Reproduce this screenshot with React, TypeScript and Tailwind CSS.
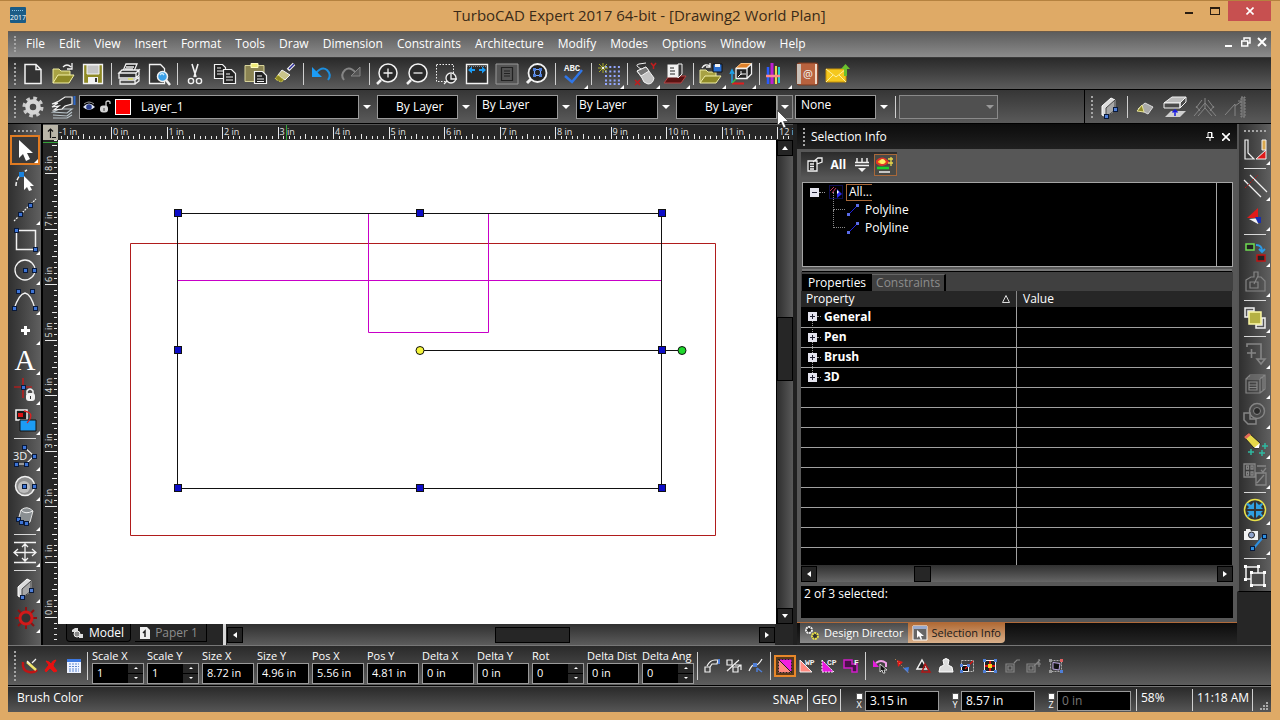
import React, { useState } from "react";
import clsx from "clsx";

const W = "#f2f2f2";
const B = "#4f7fd8";
const G = "#858585";

const node = (x: number, y: number, c = "#3d74d6") => (
  <rect x={x - 1.5} y={y - 1.5} width="4" height="4" fill={c} stroke="#0a1a3a" strokeWidth="1" />
);

// every drawing sits in a 24 x 24 box
const icons: Record<string, React.ReactNode> = {
  new: <path d="M4 2.5h11l5 5v14H4zM15 2.5v5h5" fill="#333" stroke={W} strokeWidth="1.5" />,
  open: (
    <>
      <path d="M2 21V7h6l2 2h9v4" fill="#a8a244" stroke="#eceaa0" />
      <path d="M2 21l5-8h16l-5 8z" fill="#8f8a26" stroke="#f3f0a8" />
      <path d="M12 5q4-4 8 0M21 1v6h-5" fill="none" stroke={W} strokeWidth="1.3" />
    </>
  ),
  save: (
    <>
      <path d="M2.5 2.5h19v19h-19z" fill="#8f8a26" stroke={W} strokeWidth="1.3" />
      <path d="M6 3h12v9H6z" fill="#c4c4c4" stroke={W} />
      <path d="M7 15h10v6H7z" fill={W} />
      <path d="M14 16h2v4h-2z" fill="#333" />
    </>
  ),
  print: (
    <>
      <path d="M6 9l3-7h11l-3 7zM9 5h8M8 7h8" fill="#222" stroke={W} strokeWidth="1.3" />
      <path d="M2 11l3-3h17l-3 3zM2 11h17v5H2zM19 11l3-3v5l-3 3" fill="#333" stroke={W} strokeWidth="1.3" />
      <path d="M3 18h15v4H3zM18 18l4-3v4l-4 3" fill="#555" stroke={W} strokeWidth="1.3" />
      <path d="M11 17h5" stroke="#dfe25a" strokeWidth="1.5" />
    </>
  ),
  preview: (
    <>
      <path d="M2.5 2.5h11l4 4v15h-15z" fill="#333" stroke={W} strokeWidth="1.3" />
      <path d="M19 18l4 5" stroke={W} strokeWidth="2.5" />
      <circle cx="15.5" cy="14.5" r="5" fill="#3aa0e8" stroke={W} strokeWidth="1.5" />
      <path d="M13 13q2-3 4 0" stroke="#c8ebff" fill="none" strokeWidth="1.5" />
    </>
  ),
  cut: (
    <>
      <path d="M9 2l4 13M15 2l-4 13" stroke={W} strokeWidth="1.6" />
      <circle cx="8" cy="19" r="2.6" fill="none" stroke={W} strokeWidth="1.4" />
      <circle cx="16" cy="19" r="2.6" fill="none" stroke={W} strokeWidth="1.4" />
    </>
  ),
  copy: (
    <>
      <path d="M1.5 2.5h8l3 3v11h-11zM4 6h4M4 9h6M4 12h6" fill="#222" stroke={W} strokeWidth="1.2" />
      <path d="M10.5 7.5h8l4 4v10h-12zM13 12h4M13 15h7M13 18h7" fill="#222" stroke={W} strokeWidth="1.2" />
    </>
  ),
  paste: (
    <>
      <path d="M2 3.5h19v16H2z" fill="#8a8352" stroke="#d8d49a" />
      <path d="M8 1.5h7v4H8z" fill="#efeb7a" stroke="#fffcc0" />
      <path d="M11.5 9.5h8l4 4v8h-12zM14 14h5M14 17h7M14 19.5h7" fill="#222" stroke={W} strokeWidth="1.2" />
    </>
  ),
  brush: (
    <>
      <path d="M21 2l-6 6" stroke={W} strokeWidth="3.5" />
      <path d="M21 2l-5 5" stroke="#2c2c9c" strokeWidth="1.5" />
      <path d="M9 8l8 5-5 5-7-5z" fill="#c9c48a" stroke={W} />
      <path d="M5 13l6 5-3 2-6-3z" fill="#908a20" stroke="#d9d35a" strokeDasharray="2 1" />
    </>
  ),
  undo: (
    <>
      <path d="M7 11q6-7 11-3 5 5 1 10" fill="none" stroke="#1c8fe0" strokeWidth="2" />
      <path d="M3 5v10h10z" fill="#1c9cf5" />
    </>
  ),
  redo: (
    <>
      <path d="M17 11q-6-7-11-3-5 5-1 10" fill="none" stroke={G} strokeWidth="2" />
      <path d="M21 5v9h-9z" fill="#555" stroke={G} />
    </>
  ),
  zoomIn: (
    <>
      <circle cx="13" cy="11" r="9" fill="#2a2a2a" stroke={W} strokeWidth="1.5" />
      <path d="M13 6.5v9M8.5 11h9" stroke={W} strokeWidth="1.3" />
      <path d="M6 18l-4 4" stroke={W} strokeWidth="2.5" />
    </>
  ),
  zoomOut: (
    <>
      <circle cx="13" cy="11" r="9" fill="#2a2a2a" stroke={W} strokeWidth="1.5" />
      <path d="M8.5 11h9" stroke={W} strokeWidth="1.3" />
      <path d="M6 18l-4 4" stroke={W} strokeWidth="2.5" />
    </>
  ),
  zoomWindow: (
    <>
      <path d="M1.500 2.500h17v17h-17z" fill="none" stroke={W} strokeDasharray="1.5 1.5" />
      <circle cx="16" cy="16" r="5" fill="#2e2e2e" stroke={W} strokeWidth="1.3" />
      <path d="M12 19l-3 3M16 12v5h6" stroke={W} strokeWidth="1.3" fill="none" />
    </>
  ),
  fit: (
    <>
      <path d="M1.5 2.5h21v19h-21z" fill="#2a2a2a" stroke={W} strokeWidth="1.4" />
      <path d="M3 8l4-3.5V7h3v2H7v2.500zM21 8l-4-3.500V7h-3v2h3v2.500z" fill="#1c9cf5" />
      <path d="M2 4.5h20" stroke={G} strokeDasharray="1 1" />
    </>
  ),
  page: (
    <>
      <path d="M1 2h22v20H1z" fill="#555" stroke="#9a9a9a" />
      <path d="M6.5 5.5h11v13h-11zM9 9h6M9 11.5h6M9 14h6" fill="none" stroke="#222" strokeWidth="1.2" />
    </>
  ),
  zoomView: (
    <>
      <circle cx="12.5" cy="11" r="9" fill="#222" stroke={W} strokeWidth="1.8" />
      <path d="M9.500 7.500h6v6h-6z" fill="none" stroke="#7aa6ff" strokeWidth="1.2" />
      <path d="M8 6h3v3H8zM14 6h3v3h-3zM8 12h3v3H8zM14 12h3v3h-3z" fill={B} />
      <path d="M6 17l-4 4" stroke={W} strokeWidth="3" />
    </>
  ),
  spell: (
    <>
      <text x="3" y="9" fontSize="9" fontWeight="700" fill={W} fontFamily="Liberation Mono, monospace">ABC</text>
      <path d="M4 14l7 6L21 8" fill="none" stroke="#2f76e8" strokeWidth="2.5" />
    </>
  ),
  grid: (
    <>
      <path d="M8 5h15M8 9.5h15M8 14h15M8 18.500h15M8 22h15" stroke="#93a7ff" strokeWidth="2" strokeDasharray="2 2.300" />
      <path d="M2 2l8 8M10 2l-8 8M6 1v10M1 6h10" stroke="#a9ac2a" strokeWidth="1" />
      <path d="M5 5h2v2H5z" fill={W} />
    </>
  ),
  mouse: (
    <>
      <path d="M4 9l9-4 8 11q-1 6-6 6-5-1-6-6z" fill="#c4c4c4" stroke={W} />
      <path d="M4 9l9-4 3 4-8 5z" fill="#777" stroke={W} />
      <path d="M8 7Q1 3 6 2l7-1" fill="none" stroke={W} />
      <path d="M2 18l5 5M7 18l-5 5M18 1l2.500 3L23 1M20.500 4v3" stroke="#c21d1d" strokeWidth="1.5" fill="none" />
    </>
  ),
  plane: (
    <>
      <path d="M1 21l5-7h17l-5 7z" fill="#5a1212" stroke="#b54545" />
      <path d="M4.5 2.5h11v13h-11z" fill={W} />
      <path d="M7 6h4M7 9h5M7 12h5" stroke="#222" />
      <path d="M15 2h4v10l-4 4z" fill="#3a3a3a" stroke={W} />
    </>
  ),
  folderView: (
    <>
      <path d="M1 21V8h6l2 2h8v4" fill="#a8a244" stroke="#eceaa0" />
      <path d="M1 21l5-7h16l-5 7z" fill="#8f8a26" stroke="#f3f0a8" />
      <path d="M14 2h9v8h-9z" fill="#2b6fd0" stroke="#111" />
      <path d="M16 2h5v3h-5z" fill={W} />
      <path d="M3 6q3-5 8-2M11 1v4H7" fill="none" stroke={W} strokeWidth="1.3" />
    </>
  ),
  box3d: (
    <>
      <path d="M7 6l5-4.500h10L18 6z" fill="#e0812a" stroke="#f9c080" />
      <path d="M7 6.500h11v10H7zM18 6l4.500-4V12L18 16.500" fill="#222" stroke={W} strokeWidth="1.3" />
      <path d="M12 9v4M12 12l-3 3M12 12h5" stroke={W} />
      <path d="M3 21V9M1 12l2-4 2 4" stroke="#1ca0e8" strokeWidth="1.5" fill="none" />
      <path d="M3 21.500h12" stroke="#e01e1e" strokeWidth="2" />
      <path d="M3 21l4-4" stroke="#32c24a" strokeWidth="1.5" />
    </>
  ),
  pens: (
    <>
      <path d="M3 5v17" stroke="#2a5bff" strokeWidth="2.5" />
      <path d="M7 1v21" stroke="#c01fd0" strokeWidth="3" />
      <path d="M11 4v18" stroke="#e8e045" strokeWidth="2" />
      <path d="M14 5v16" stroke="#24c9d8" strokeWidth="2" />
      <path d="M1 14h14" stroke="#ff8c8c" strokeWidth="2.5" />
    </>
  ),
  address: (
    <>
      <rect x="2" y="1" width="21" height="22" rx="2" fill="#b8623e" stroke="#7d3c22" />
      <path d="M2 2h4v20H2z" fill="#c9c0b8" />
      <path d="M20 2h2v20h-2z" fill="#f0d9c8" />
      <text x="8" y="16" fontSize="11" fill={W} fontFamily="Open Sans, sans-serif">@</text>
    </>
  ),
  mail: (
    <>
      <path d="M1 7h20v13H1z" fill="#f5c81e" stroke="#c79208" />
      <path d="M1 7l10 8L21 7M1 20l7-7M21 20l-7-7" fill="none" stroke="#fff2a0" />
      <path d="M19 14V7h-3l4.500-5L25 7h-3v7z" fill="#6bc02e" />
    </>
  ),
  gear: (
    <>
      <circle cx="12" cy="12" r="8.5" fill="none" stroke="#c9c9c9" strokeWidth="4" strokeDasharray="3.5 3.17" />
      <circle cx="12" cy="12" r="5.5" fill="none" stroke="#d6d6d6" strokeWidth="4.5" />
    </>
  ),
  layersHand: (
    <>
      <path d="M2 17l6-3h13l-5 4zM2 20l14 1 5-4M2 23h14l5-3" fill="#444" stroke="#b9c4c9" strokeWidth="1.2" />
      <path d="M1 9l7-3 6-4h7v7l-7 2-3 3-8 1 5-4-7 1 6-4z" fill="#2c2c2c" stroke={W} strokeWidth="1.2" />
      <path d="M23.5 1v9" stroke="#2b66c9" strokeWidth="2" />
    </>
  ),
  slab: (
    <>
      <path d="M5 11l9-8 4 2v10l-9 7-4-2z" fill="#dcdcdc" stroke="#fff" />
      <path d="M9 13l9-8v10l-9 7z" fill="#a6a6a6" stroke="#444" />
      {node(18, 14, B)}{node(9, 21, B)}
    </>
  ),
  prism: (
    <>
      <path d="M5 14l7-6 8 4-5 7z" fill="#a9a9a9" stroke="#ddd" />
      <path d="M4 16l5-6 2 7z" fill="#8f8a26" stroke="#e6e29a" />
    </>
  ),
  slabUp: (
    <>
      <path d="M1 8l8-6h14l-6 6z" fill="#bbb" stroke={W} />
      <path d="M1 8h16v5H1zM17 8l6-6v5l-6 6z" fill="#4a4a4a" stroke={W} />
      <path d="M2 22l6-6h15l-6 6z" fill="#cfcfcf" />
      <path d="M12 21v-6M9.500 17.500L12 15l2.500 2.500" stroke="#1a1ae0" strokeWidth="1.5" fill="none" />
    </>
  ),
  roof: <path d="M1 21L12 8l11 13M5 21l7-8 7 8M12 3v10M7 16l-4-5M17 16l4-5M9 5l-6 8M15 5l6 8" fill="none" stroke={G} />,
  wallUp: (
    <>
      <path d="M2 20L12 9v12M12 11l7-5M19 6l-1 4M19 6h-4" fill="none" stroke={G} />
      <path d="M18 2h4v20h-4z" fill="#6a6a6a" stroke={G} strokeDasharray="2 1" />
    </>
  ),
  arrow: <path d="M6 2v18l4-4 3 7 4-2-3-6h6z" fill="#fff" />,
  editNode: (
    <>
      <path d="M3 18q0-10 11-16" stroke={W} fill="none" strokeDasharray="4 2" strokeWidth="1.5" />
      <path d="M6 4h5v5H6z" fill="#1a84e0" />
      <path d="M11 8v14l3-3 2 4 3-1-2-4h4z" fill="#fff" />
    </>
  ),
  line: (
    <>
      <path d="M1 23L23 1" stroke={W} strokeWidth="1.2" strokeDasharray="2 1" />
      {node(7, 16)}{node(17, 7)}
    </>
  ),
  rect: (
    <>
      <path d="M3.5 2.5h19v19h-19z" fill="none" stroke={W} strokeWidth="1.5" />
      {node(3, 2)}{node(22, 21)}
    </>
  ),
  circle: (
    <>
      <circle cx="12" cy="12" r="10" fill="none" stroke={W} strokeWidth="1.3" />
      {node(12, 12)}{node(21, 12)}
    </>
  ),
  curve: (
    <>
      <path d="M1 21Q6 6 12 5q6 1 10 16" fill="none" stroke={W} strokeWidth="1.3" />
      {node(1, 20)}{node(22, 20)}{node(5, 3)}{node(19, 3)}
    </>
  ),
  point: <path d="M11 8h3v3h3v3h-3v3h-3v-3H8v-3h3z" fill="#fff" />,
  text: (
    <text x="12" y="22" fontSize="29" textAnchor="middle" fill="#fff" fontFamily="Liberation Serif, serif">A</text>
  ),
  lockPoint: (
    <>
      <path d="M10 0v20M1 9h18" stroke="#d11" strokeWidth="1.2" />
      {node(10, 9)}
      <path d="M14 16v-3q3-4 6 0v3" fill="none" stroke={W} strokeWidth="1.5" />
      <rect x="13" y="15" width="9" height="8" rx="3" fill={W} />
      <path d="M17 18h1v3h-1z" fill="#333" />
    </>
  ),
  moveCopy: (
    <>
      <path d="M3 2h11v10H3z" fill="#1a1a1a" stroke={W} strokeWidth="1.5" />
      <path d="M5 5h5v4H5z" fill="#d11" />
      <path d="M7 12h16v11H7z" fill="#1c9cf5" stroke="#111" />
      <path d="M11 3q12 2 3 12" fill="none" stroke="#e02020" strokeWidth="1.3" />
    </>
  ),
  poly3d: (
    <>
      <text x="0" y="16" fontSize="11" fill={W} fontFamily="Open Sans, sans-serif">3D</text>
      <path d="M11 3l10 9-8 8H2" fill="none" stroke={W} strokeWidth="1.2" />
      {node(11, 3)}{node(21, 12)}{node(13, 20)}{node(3, 20)}
    </>
  ),
  sphere: (
    <>
      <circle cx="12" cy="12" r="9.5" fill="#8d8d8d" stroke={W} strokeWidth="1.5" />
      <circle cx="11" cy="13" r="6" fill="#bdbdbd" />
      {node(11, 12)}{node(21, 12)}
    </>
  ),
  cylinder: (
    <>
      <path d="M8 6q6-5 12 1l-3 11q-4 3-9 0L6 13z" fill="#8a8f92" stroke="#e3e3e3" />
      <path d="M8 6q4 5 12 1" fill="none" stroke={W} />
      {node(5, 15)}{node(13, 19)}{node(8, 18)}
    </>
  ),
  dimension: (
    <path d="M1 2.5h22M1 22.5h22M12 4v17M1 12.5h22M9 7l3-3 3 3M9 18l3 3 3-3M5 9l-4 3.500 4 3.500M19 9l4 3.500-4 3.500" fill="none" stroke={W} strokeWidth="1.3" />
  ),
  redGear: (
    <>
      <path d="M13 1v22M2 12h22M5 4l16 16M21 4L5 20" stroke="#8d1111" strokeWidth="2" />
      <circle cx="13" cy="12" r="6" fill="#333" stroke="#d01a1a" strokeWidth="3" />
    </>
  ),
  uShape: (
    <>
      <path d="M2 2h3v13l6 6H2zM2 2v19" fill="none" stroke={W} strokeWidth="1.2" />
      <path d="M19 2h4v10h-4z" fill="#d9a84e" stroke={W} />
      <path d="M23 12v9H13z" fill="#e01a1a" stroke={W} />
    </>
  ),
  trim: (
    <>
      <path d="M1 6l17 17M7 1l17 17" stroke={W} strokeWidth="1.2" />
      <path d="M2 14L15 1" stroke="#c01414" strokeDasharray="2 1.5" />
    </>
  ),
  wedge: (
    <>
      <path d="M15 4v10H4z" fill="#e01a1a" />
      <path d="M6 15l9 5 2-6z" fill={W} />
      <path d="M12 13h6v6h-3z" fill="#1a2fae" />
    </>
  ),
  replace: (
    <>
      <path d="M3 4h8v6H3z" fill="#222" stroke="#6fdc52" strokeWidth="1.5" />
      <path d="M14 15h8v6h-8z" fill="#222" stroke="#c01414" strokeWidth="1.5" />
      <path d="M13 5q6 0 6 6M16 9l3 3 3-3" fill="none" stroke="#2c9be8" strokeWidth="1.8" />
    </>
  ),
  house: <path d="M3 10l5-3h3V2h4v5h3l4 4v10H3zM7 12h8v6H7zM11 14l4-8" fill="none" stroke={G} strokeWidth="1.2" />,
  overlap: (
    <>
      <path d="M2 2h9v3H5v6H2zM22 22h-9v-3h6v-7h3z" fill="#555" stroke={W} strokeWidth="1.5" />
      <path d="M6 6h12v12H6z" fill="#b5b144" stroke="#fbf8a5" strokeWidth="1.5" />
    </>
  ),
  addDown: <path d="M4 5V2h14v15M4 11h9M8.5 7v9M14 17l4 5 4-5z" fill="none" stroke={G} strokeWidth="1.6" />,
  boxes: <path d="M3 7h14v14H3zM3 7l4-4h15v14l-5 4M17 7l5-4M6 10h8v8H6zM6 13h8M6 15.500h8M5 5h15v14" fill="none" stroke={G} strokeWidth="1.2" />,
  union: (
    <>
      <circle cx="14" cy="9" r="7.5" fill="#4a4a4a" stroke={G} strokeWidth="1.5" />
      <circle cx="14" cy="9" r="3.5" fill="#2a2a2a" stroke={G} />
      <path d="M1 11h6v6h6v5H5l-4-4z" fill="#3a3a3a" stroke={G} strokeWidth="1.5" />
    </>
  ),
  pencil: (
    <>
      <path d="M1 5l5-4 11 10-1 5h-5z" fill="#e6d94a" stroke="#222" />
      <path d="M1 5l5-4 2 2-5 4z" fill="#e06a5a" />
      <path d="M16 16l1-5-6 5z" fill="#fff" />
      <path d="M8 17v6M5 20h6M19 18v6M16 21h6M22 11v6M19 14h6" stroke="#2fb8a0" strokeWidth="1.5" />
    </>
  ),
  blocks: (
    <path d="M1 2h11v13H1zM3.5 4h2v3h-2zM8 4h2v3H8zM3.5 10h2v3h-2zM8 10h2v3H8zM13 11h10v12H13zM14 21l7-8M14 4h9M18 8l2 2 3-4" fill="none" stroke={G} strokeWidth="1.3" />
  ),
  compress: (
    <>
      <circle cx="12" cy="12" r="10.5" fill="#333" stroke="#e8e04a" strokeWidth="1.5" />
      <path d="M11 4v7H4l2-2-3-3 2-1 3 2zM13 4v7h7l-2-2 2-3-1-1-3 2zM11 20v-7H4l2 2-2 3 1 1 3-2zM13 20v-7h7l-2 2 2 3-1 1-3-2z" fill="#2f9fe0" />
    </>
  ),
  camera: (
    <>
      <path d="M3 1h4l1 2h7v9H1V3h2z" fill={W} />
      <circle cx="8.5" cy="7" r="3" fill="#8fa3cc" stroke="#222" />
      <path d="M10 21L21 8" stroke="#2d8fe0" strokeWidth="2" />
      {node(9, 20, "#2d8fe0")}{node(21, 8, "#2d8fe0")}
    </>
  ),
  group: (
    <>
      <path d="M3 3h12v12H3z" fill="#333" stroke={W} strokeWidth="1.5" />
      <path d="M8 9h13v12H8z" fill="#4a4a4a" stroke={W} strokeWidth="1.5" />
      <path d="M1 1h3v3H1zM14 1h3v3h-3zM1 14h3v3H1zM7 7h3v3H7zM20 7h3v3h-3zM7 20h3v3H7zM20 20h3v3h-3z" fill="#fff" />
    </>
  ),
};

const small: Record<string, React.ReactNode> = {
  magic: (
    <>
      <path d="M1 4q-1 9 6 10 5 1 8-2" fill="none" stroke="#c01414" strokeWidth="2.5" />
      <path d="M5 4l9 8" stroke="#efe46a" strokeWidth="2.5" />
      <path d="M5 3l3 3M14 1l-4 4" stroke={W} strokeWidth="1.2" />
    </>
  ),
  cancel: <path d="M2 3q3 0 5 3 2-4 5-4-3 4-3 6l4 5-3 1-4-4-4 4-1-2 4-5z" fill="#e81111" stroke="#e81111" />,
  sheet: (
    <>
      <path d="M1 1h14v14H1z" fill="#eef3ff" />
      <path d="M1 1h14v3H1z" fill="#3c78e0" />
      <path d="M3 6h10M3 8.5h10M3 11h10M3 13h10" stroke="#5d87cf" strokeDasharray="2 1" />
    </>
  ),
  snapA: (
    <>
      <path d="M1 9h5v5H1zM3 8q3-6 8-6h3l-1 4H8l-2 3" fill="none" stroke={W} strokeWidth="1.2" />
      <path d="M15 1v5" stroke={B} strokeWidth="2" />
    </>
  ),
  snapB: <path d="M1 2h5v5H1zM1 13L13 2M7 9h5v5H7zM9 7h6v5M12 9l3-2" fill="none" stroke={W} strokeWidth="1.2" />,
  snapC: (
    <>
      <path d="M1 13q3-7 6-6t7-6" fill="none" stroke={W} strokeWidth="1.2" />
      <path d="M5 5h4v4H5z" fill={B} />
      <path d="M9 10l5 4M9 10v4" stroke={B} strokeWidth="1.5" />
    </>
  ),
  selRect: (
    <>
      <path d="M1 1h14v14H1z" fill="#f020e0" />
      <path d="M1 1v14h14z" fill="#ff8a80" />
      <path d="M1.5 1.5h13v13h-13z" fill="none" stroke="#222" strokeDasharray="2 1" />
      <path d="M1 1l14 14" stroke="#222" />
    </>
  ),
  selWP: (
    <>
      <path d="M1 2v12h12z" fill="#ff8a80" stroke={W} />
      <text x="6" y="7" fontSize="8" fontWeight="700" fill={W} fontFamily="Liberation Mono, monospace">WP</text>
    </>
  ),
  selCP: (
    <>
      <path d="M1 2v12h12z" fill="#e81be0" stroke={W} strokeDasharray="2 1" />
      <text x="6" y="7" fontSize="8" fontWeight="700" fill={W} fontFamily="Liberation Mono, monospace">CP</text>
    </>
  ),
  selF: (
    <>
      <path d="M1 2h8v4h5v8H9v-4H1z" fill="#4a1048" stroke="#d01cc8" strokeWidth="1.5" />
      <text x="11" y="7" fontSize="8" fontWeight="700" fill={W} fontFamily="Liberation Mono, monospace">F</text>
    </>
  ),
  lasso: (
    <>
      <path d="M1 2v7h6z" fill="#e81be0" />
      <path d="M4 5q5-4 10 0v4" fill="none" stroke="#f0a0e8" strokeWidth="2" />
      <path d="M8 6v8l2-2 1 3h2l-1-3h3z" fill="#111" stroke={W} strokeWidth=".8" />
    </>
  ),
  flip: (
    <>
      <path d="M3 2l6 2-5 5z" fill="#e01a1a" />
      <path d="M9 10l6-1-1 6z" fill="#3c78e0" />
      <path d="M1 1l14 14" stroke="#e0a060" strokeDasharray="1 2" />
    </>
  ),
  tri: (
    <>
      <path d="M6 2l5 9H1z" fill="#222" stroke={W} strokeWidth="1.5" />
      <path d="M9 6l5 8-8 0z" fill="none" stroke="#b01616" strokeWidth="1.5" />
    </>
  ),
  stamp: (
    <path d="M5 2q3-3 6 0l-1 5 4 2 1 5H1l1-5 4-2z" fill="#ddd" stroke="#fff" />
  ),
  scaleBox: (
    <>
      <path d="M1.5 2.5h12v11h-12z" fill="none" stroke="#bbb" strokeDasharray="2 1" />
      <path d="M1.5 7.5h7v6h-7z" fill="#111" stroke={W} />
      <path d="M5 11l8-8" stroke="#d11" strokeWidth="1.2" />
      <path d="M0 6h3v3H0zM7 6h3v3H7zM0 12h3v3H0z" fill={B} />
    </>
  ),
  centerBox: (
    <>
      <path d="M2.5 2.5h11v11h-11z" fill="#222" stroke={W} />
      <path d="M8 3v10M3 8h10" stroke="#d11" strokeWidth="2" />
      <path d="M6 6h4v4H6z" fill="#f5d21e" />
      <path d="M1 1h3v3H1zM12 1h3v3h-3zM1 12h3v3H1zM12 12h3v3h-3z" fill={B} />
    </>
  ),
  dimA: <path d="M2 6h8v8H2zM4 8h4v4H4zM10 5l3-3h3" fill="none" stroke={G} strokeWidth="1.2" />,
  dimB: <path d="M1 6h8v8H1zM3 8h4v4H3zM8 8l6-6M13 1v8M10 6h5" fill="none" stroke={G} strokeWidth="1.2" />,
  frame: (
    <>
      <path d="M2.5 2.5h11v11h-11z" fill="none" stroke="#aaa" strokeDasharray="2 1" />
      <path d="M5 4.500l7 1-1 6.500-6-1z" fill="#111" stroke="#b9a4e0" />
      <path d="M1 1h3v3H1zM1 12h3v3H1z" fill="#999" />
      <path d="M12 1h3v3h-3z" fill="#e06060" />
      <path d="M12 12h3v3h-3z" fill={B} />
    </>
  ),
};

type Item = [icon: string, label: string, menu?: boolean] | null;

const mainTools: Item[] = [
  ["new", "New"], ["open", "Open"], ["save", "Save"], null,
  ["print", "Print"], ["preview", "Print preview"], null,
  ["cut", "Cut"], ["copy", "Copy"], ["paste", "Paste"], ["brush", "Format painter"], null,
  ["undo", "Undo"], ["redo", "Redo"], null,
  ["zoomIn", "Zoom in"], ["zoomOut", "Zoom out"], ["zoomWindow", "Zoom window"], ["fit", "Zoom extents"],
  ["page", "Full page"], ["zoomView", "Zoom selection"], null,
  ["spell", "Spelling", true], null,
  ["grid", "Grid", true], null,
  ["mouse", "Drag", true], ["plane", "Workplane", true], null,
  ["folderView", "Named view", true], ["box3d", "Isometric view", true], null,
  ["pens", "Colors", true], ["address", "Contacts"], ["mail", "Send mail"],
];

const leftTools: Item[] = [
  ["arrow", "Select", true], ["editNode", "Edit node"], ["line", "Line", true], ["rect", "Rectangle", true],
  ["circle", "Circle", true], ["curve", "Curve", true], ["point", "Point", true], ["text", "Text", true],
  ["lockPoint", "Constraint point", true], ["moveCopy", "Copy entities", true], null,
  ["poly3d", "3D polyline", true], ["sphere", "Sphere", true], ["cylinder", "Cylinder", true], null,
  ["dimension", "Dimension", true], null,
  ["slab", "Wall", true], ["redGear", "Parts", true],
];

const rightTools: Item[] = [
  ["uShape", "Miter", true], null,
  ["trim", "Trim", true], ["wedge", "Wedge", true], null,
  ["replace", "Replace", true], ["house", "Block", true], null,
  ["overlap", "Draw order", true], null,
  ["addDown", "Insert", true], ["boxes", "Shell", true], ["union", "Union", true], ["pencil", "Sketch", true],
  ["blocks", "Pattern", true], null,
  ["compress", "Compress", true], ["camera", "Camera", true], null,
  ["group", "Group"],
];

const wallTools: Item[] = [
  ["slab", "Wall"], null, ["prism", "Prism"], ["slabUp", "Raise slab"], ["roof", "Roof"], ["wallUp", "Extend wall"],
];

const snapTools = ["snapA", "snapB", "snapC"];
const selectTools = ["selRect", "selWP", "selCP", "selF"];
const modifyTools = ["lasso", "flip", "tri", "stamp", "scaleBox", "centerBox", "dimA", "dimB", "frame"];

const menus = [
  "File", "Edit", "View", "Insert", "Format", "Tools", "Draw", "Dimension", "Constraints",
  "Architecture", "Modify", "Modes", "Options", "Window", "Help",
];

const fields = [
  { label: "Scale X", value: "1", spin: true },
  { label: "Scale Y", value: "1", spin: true },
  { label: "Size X", value: "8.72 in" },
  { label: "Size Y", value: "4.96 in" },
  { label: "Pos X", value: "5.56 in" },
  { label: "Pos Y", value: "4.81 in" },
  { label: "Delta X", value: "0 in" },
  { label: "Delta Y", value: "0 in" },
  { label: "Rot", value: "0", spin: true },
  { label: "Delta Dist", value: "0 in" },
  { label: "Delta Ang", value: "0", spin: true },
];

const Tool = ({ item, active }: { item: Item; active?: boolean }) => {
  if (!item) return null;
  const [icon, label, menu] = item;
  return (
    <button
      type="button"
      aria-label={label}
      className={clsx(
        "relative flex h-[30px] w-[30px] shrink-0 items-center justify-center",
        active && "border-2 border-[#e07b22] bg-[#3a3a3a]"
      )}
    >
      <svg className="h-6 w-6 shrink-0 overflow-visible" viewBox="0 0 24 24" aria-hidden="true">{icons[icon]}</svg>
      {menu && (
        <svg className="absolute right-0 bottom-0 h-1 w-1" viewBox="0 0 4 4" aria-hidden="true">
          <path d="M4 0v4H0z" fill="#fff" />
        </svg>
      )}
    </button>
  );
};

const ToolList = ({ items, vertical, active }: { items: Item[]; vertical?: boolean; active?: number }) => (
  <div className={clsx("flex items-center", vertical && "flex-col")}>
    {items.map((item, i) =>
      item ? (
        <Tool key={i} item={item} active={active === i} />
      ) : vertical ? (
        <div key={i} className="flex h-1.5 items-center"><div className="h-px w-[22px] bg-[#d8d8d8]" /></div>
      ) : (
        <div key={i} className="flex w-1.5 justify-center"><div className="h-[22px] w-px bg-[#cfcfcf]" /></div>
      )
    )}
  </div>
);

const SmallTool = ({ name, active }: { name: string; active?: boolean }) => (
  <button
    type="button"
    aria-label={name}
    className={clsx("flex h-[22px] w-[22px] shrink-0 items-center justify-center", active && "border-2 border-[#e8872a] bg-[#5a3a1a]")}
  >
    <svg className="h-4 w-4 shrink-0 overflow-visible" viewBox="0 0 16 16" aria-hidden="true">{small[name]}</svg>
  </button>
);

const Grip = ({ className }: { className?: string }) => (
  <div className={clsx("w-0 shrink-0 border-l-2 border-dotted border-[#a5a5a5]", className)} />
);

const Down = ({ color = "#fff" }: { color?: string }) => (
  <svg className="h-1 w-2" viewBox="0 0 8 4" aria-hidden="true"><path d="M0 0h8L4 4z" fill={color} /></svg>
);

const Combo = ({ label, value, width, className, hot }: { label: string; value: string; width: string; className?: string; hot?: boolean }) => (
  <div className="flex h-6 items-stretch">
    <select aria-label={label} className={clsx("appearance-none border border-[#9a9a9a] bg-black text-white outline-none", width, className)}>
      <option>{value}</option>
    </select>
    <div className={clsx("flex w-4 items-center justify-center", hot && "border border-[#8c8c8c] bg-[#4a4a4a]")}><Down /></div>
  </div>
);

const ScrollButton = ({ dir }: { dir: "up" | "down" | "left" | "right" }) => {
  const d = { up: "M1 6h6L4 2z", down: "M1 2h6L4 6z", left: "M6 1v6L2 4z", right: "M2 1v6l4-3z" }[dir];
  return (
    <button type="button" aria-label={"Scroll " + dir} className="flex h-4 w-4 shrink-0 items-center justify-center border border-black bg-[#242424]">
      <svg className="h-2 w-2" viewBox="0 0 8 8" aria-hidden="true"><path d={d} fill="#fff" /></svg>
    </button>
  );
};

const INCH = 55.5;

const Ruler = ({ origin, labels, side }: { origin: number; labels: number[]; side?: boolean }) => {
  const ticks = [];
  for (let i = -10; i <= (side ? 86 : 240); i++) {
    const at = Math.round(origin + (side ? -1 : 1) * (i * INCH) / 10) + 0.5;
    const start = i % 10 === 0 ? 2 : i % 5 === 0 ? 9 : 11;
    ticks.push(side ? `M${start} ${at}H14` : `M${at} ${start}V14`);
  }
  return (
    <svg className={side ? "h-full w-[15px]" : "h-[15px] w-full"} aria-hidden="true">
      <path d={ticks.join("")} stroke="#e8e8e8" fill="none" />
      {labels.map((n) => {
        const p = origin + (side ? -1 : 1) * n * INCH;
        return (
          <text
            key={n}
            fontSize="9"
            fill="#e0e0e0"
            transform={side ? `translate(9 ${p - 2}) rotate(-90)` : `translate(${Math.max(p + 2, 1)} 10)`}
          >
            {n} in
          </text>
        );
      })}
      <path d={side ? "M0 2.5H15" : "M228.5 0V15"} stroke="#35a33a" />
    </svg>
  );
};

const handles = [
  [120, 73], [362, 73], [604, 73],
  [120, 210], [604, 210],
  [120, 348], [362, 348], [604, 348],
];

const Drawing = () => (
  <svg className="h-full w-full" role="img" aria-label="Drawing">
    <path d="M72.5 103.5h585v292h-585z" fill="none" stroke="#b01c1c" />
    <path d="M120 140.5h484M310.5 73v119.5h120V73" fill="none" stroke="#c800c8" />
    <path d="M119.5 73.5h484v275h-484zM362 210.5h262" fill="none" stroke="#111" />
    {handles.map(([x, y]) => (
      <rect key={x + "-" + y} x={x - 3.5} y={y - 3.5} width="7" height="7" fill="#0d0dc8" stroke="#111" />
    ))}
    <circle cx="362" cy="210.5" r="4" fill="#f5f53a" stroke="#111" />
    <circle cx="624" cy="210.5" r="4" fill="#1fd82c" stroke="#111" />
  </svg>
);

const Workspace = () => (
  <section className="flex min-w-0 flex-1 flex-col bg-[#262626]">
    <div className="flex min-h-0 flex-1">
      <div className="flex w-[15px] shrink-0 flex-col overflow-hidden border-t border-[#555]">
        <button type="button" aria-label="Ruler origin" className="flex h-[15px] w-[15px] shrink-0 items-center justify-center bg-[#b9b5a8]">
          <svg className="h-3 w-3" viewBox="0 0 12 12" aria-hidden="true">
            <path d="M5.5 11V2M3 4.5L5.5 2 8 4.5M7 10.5h4" stroke="#111" fill="none" strokeWidth="1.2" />
          </svg>
        </button>
        <div className="min-h-0 flex-1"><Ruler side origin={477} labels={[0, 1, 2, 3, 4, 5, 6, 7, 8]} /></div>
      </div>
      <div className="flex min-w-0 flex-1 flex-col">
        <div className="h-4 shrink-0 overflow-hidden border-t border-[#555]">
          <Ruler origin={53} labels={[-1, 0, 1, 2, 3, 4, 5, 6, 7, 8, 9, 10, 11, 12]} />
        </div>
        <div className="flex min-h-0 flex-1">
          <div className="min-w-0 flex-1 bg-white"><Drawing /></div>
          <div className="flex w-[17px] flex-col border-l border-black bg-linear-to-r from-[#2e2e2e] to-[#5a5a5a]">
            <ScrollButton dir="up" />
            <div className="grow-[161]" />
            <div className="h-16 border border-black bg-[#262626]" />
            <div className="grow-[226]" />
            <ScrollButton dir="down" />
          </div>
        </div>
        <div className="flex h-[21px] shrink-0 bg-[#262626]">
          <div role="tablist" className="flex w-[165px] gap-1 pl-2">
            <button role="tab" aria-selected="true" className="flex h-[18px] items-center gap-1.5 rounded-b border-r border-b border-l border-black bg-[#1f1f1f] pr-1.5 pl-1 text-white">
              <svg className="h-3 w-3" viewBox="0 0 12 12" aria-hidden="true">
                <path d="M1 3l3-2h3v4H1z" fill="#ddd" />
                <circle cx="6" cy="7" r="3" fill="#888" stroke="#eee" />
                <path d="M8 7h4v4H8z" fill="#ddd" />
              </svg>
              Model
            </button>
            <button role="tab" aria-selected="false" className="flex h-[18px] items-center gap-1 border-r border-b border-black bg-[#262626] pr-2 pl-1 whitespace-nowrap text-[#8d8d8d]">
              <svg className="h-3 w-3" viewBox="0 0 12 12" aria-hidden="true">
                <path d="M1 0h7l3 3v9H1z" fill="#eee" />
                <path d="M4 6l2-2v6" stroke="#222" fill="none" strokeWidth="1.5" />
              </svg>
              Paper 1
            </button>
          </div>
          <div className="mr-px w-[3px] bg-[#d8d8d8]" />
          <div className="flex flex-1 items-center bg-linear-to-b from-[#303030] to-[#5c5c5c]">
            <ScrollButton dir="left" />
            <div className="grow-[252]" />
            <div className="h-4 w-[75px] border border-black bg-[#262626]" />
            <div className="grow-[189]" />
            <ScrollButton dir="right" />
          </div>
          <div className="w-[18px]" />
        </div>
      </div>
    </div>
  </section>
);

const PolylineIcon = () => (
  <svg className="h-3 w-3" viewBox="0 0 12 12" aria-hidden="true">
    <path d="M1 11L11 1" stroke="#2020e0" />
    <path d="M0 9h3v3H0zM9 0h3v3H9z" fill="#5a6ce8" />
  </svg>
);

const Expander = ({ open, linked }: { open?: boolean; linked?: boolean }) => (
  <span className="relative flex h-[9px] w-[9px] items-center justify-center bg-[#e4e4ee]">
    <svg className="h-[7px] w-[7px]" viewBox="0 0 7 7" aria-hidden="true">
      <path d={open ? "M1 3.5h5" : "M1 3.5h5M3.5 1v5"} stroke="#223" />
    </svg>
    {linked && <span className="absolute top-full left-1 h-[11px] border-l border-dotted border-[#999]" />}
  </span>
);

const groups = ["General", "Pen", "Brush", "3D"];
const emptyRows = [0, 1, 2, 3, 4, 5, 6, 7, 8];

const SelectionInfo = () => (
  <aside className="flex w-[440px] shrink-0 flex-col bg-[#575757]">
    <header className="flex h-[25px] shrink-0 items-center bg-linear-to-b from-[#0c0c0c] to-[#202020] pr-[3px] pl-1.5 text-white">
      <Grip className="mr-1.5 h-[18px]" />
      <h2 className="flex-1">Selection Info</h2>
      <button type="button" aria-label="Pin" className="flex h-4 w-4 items-center justify-center">
        <svg className="h-[9px] w-2" viewBox="0 0 8 9" aria-hidden="true">
          <path d="M2 .5h4v5H2zM0 5.5h8M4 5v4M5.5 1v4" fill="none" stroke="#fff" />
        </svg>
      </button>
      <button type="button" aria-label="Close panel" className="flex h-4 w-4 items-center justify-center">
        <svg className="h-2 w-2" viewBox="0 0 8 8" aria-hidden="true"><path d="M0 0l8 8M8 0L0 8" stroke="#fff" strokeWidth="1.6" /></svg>
      </button>
    </header>
    <div className="mt-[3px] mb-1 ml-1 flex h-[26px] w-24 shrink-0 items-center bg-linear-to-b from-[#2b2b2b] to-[#575757] pl-1.5">
      <button type="button" aria-label="Properties" className="flex h-6 w-6 items-center">
        <svg className="h-4 w-4" viewBox="0 0 16 16" aria-hidden="true">
          <path d="M1 4h9v10H1zM3 7h4M3 9.5h4M3 12h4M6 5l5-4h4v4l-5 2" fill="#222" stroke={W} strokeWidth="1.3" />
        </svg>
      </button>
      <button type="button" className="flex h-6 w-5 items-center font-bold text-white">All</button>
      <button type="button" aria-label="Filter" className="flex h-6 w-6 items-center justify-center">
        <svg className="h-4 w-4" viewBox="0 0 16 16" aria-hidden="true">
          <path d="M1 5.5h14M1 8.5h14M3 1v4M8 1v4M13 1v4" stroke={W} strokeWidth="1.4" />
          <path d="M4 11h8l-4 4z" fill={W} />
        </svg>
      </button>
      <button type="button" aria-label="Preview" className="flex h-[22px] w-6 items-center justify-center border border-[#a8683a] bg-[#4a4a46]">
        <svg className="h-[18px] w-[18px]" viewBox="0 0 18 18" aria-hidden="true">
          <path d="M0 6q6-7 12 0-6 6-12 0z" fill="#f5d21e" stroke="#e0342a" strokeWidth="2" />
          <circle cx="6.5" cy="5.5" r="2.5" fill="#fbf06a" />
          <path d="M15 1v9M12 3h5M12 7h5" stroke="#e8d84a" strokeWidth="1.3" />
          <path d="M1 12h12" stroke="#19d42c" strokeWidth="2.5" />
          <path d="M3 16h11" stroke={W} strokeWidth="1.5" />
        </svg>
      </button>
    </div>
    <div className="mr-1 ml-[5px] flex h-[85px] shrink-0 border border-[#a5a5a5] bg-black text-white">
      <ul className="flex-1 pl-[7px]">
        <li className="flex h-[18px] items-center">
          <Expander open />
          <span className="mr-1 w-1.5 border-b border-dotted border-[#999]" />
          <svg className="mr-[3px] h-[14px] w-[14px]" viewBox="0 0 14 14" aria-hidden="true">
            <path d="M.5 .5h13v13H.5z" fill="none" stroke="#1a1a9c" strokeDasharray="1 1" />
            <path d="M1 6l4-4M3 8l4-5" stroke="#c03060" />
            <path d="M8 4v9l5-4z" fill="#2a2ae8" />
            <path d="M8 5v4l2-2z" fill="#fff" />
          </svg>
          <span className="flex h-[17px] items-center border border-r-0 border-[#a8683a] pl-0.5">All...</span>
        </li>
        {[0, 1].map((i) => (
          <li key={i} className="ml-[23px] flex h-[18px] items-center">
            <span className="h-[18px] w-3 -translate-y-1/2 border-b border-l border-dotted border-[#888]" />
            <span className="mr-1.5 ml-0.5 flex"><PolylineIcon /></span>
            Polyline
          </li>
        ))}
      </ul>
      <div className="w-4 border-l border-[#a5a5a5]" />
    </div>
    <div className="mx-[5px] mt-0.5 h-[3px] shrink-0 border-b border-black bg-[#777]" />
    <div role="tablist" className="mr-1 ml-1 flex h-[19px] shrink-0 bg-[#404040] pt-0.5 pl-px">
      <button role="tab" aria-selected="true" className="bg-black px-1.5 text-white">Properties</button>
      <button role="tab" aria-selected="false" className="border-t border-r-2 border-[#666] border-r-black px-1 text-[#8d8d8d]">Constraints</button>
    </div>
    <div className="mr-[5px] ml-1 min-h-0 flex-1 overflow-hidden bg-black">
      <table className="w-full table-fixed border-collapse text-left text-white">
        <thead>
          <tr className="h-4 bg-[#262626]">
            <th className="w-1/2 border-r border-[#888] pl-[5px] font-normal leading-4">
              <span className="flex items-center justify-between pr-1.5">
                Property
                <svg className="h-2 w-2" viewBox="0 0 8 8" aria-hidden="true"><path d="M4 .5L.5 7.5h7z" fill="none" stroke="#ddd" /></svg>
              </span>
            </th>
            <th className="pl-1.5 font-normal leading-4">Value</th>
          </tr>
        </thead>
        <tbody>
          {groups.map((g, i) => (
            <tr key={g} className="h-5 border-b border-[#a0a0a0]">
              <td className="border-r border-[#a0a0a0] pl-[7px] font-bold leading-4">
                <span className="flex items-center">
                  <Expander linked={i < groups.length - 1} />
                  <span className="mr-[3px] w-1 border-b border-dotted border-[#999]" />
                  {g}
                </span>
              </td>
              <td />
            </tr>
          ))}
          {emptyRows.map((r) => (
            <tr key={r} className="h-5 border-b border-[#a0a0a0]">
              <td className="border-r border-[#a0a0a0]" />
              <td />
            </tr>
          ))}
        </tbody>
      </table>
    </div>
    <div className="mr-1 ml-1 flex h-[17px] shrink-0 items-center bg-linear-to-b from-[#303030] to-[#666]">
      <ScrollButton dir="left" />
      <div className="grow-[97]" />
      <div className="h-4 w-[17px] border border-black bg-[#262626]" />
      <div className="grow-[286]" />
      <ScrollButton dir="right" />
    </div>
    <p className="mt-1 mr-1 ml-1 h-8 shrink-0 bg-black pl-[3px] text-white">2 of 3 selected:</p>
    <div role="tablist" className="mt-1 flex h-[23px] shrink-0 border-t border-[#b06a3a] bg-linear-to-b from-[#0c0c0c] to-[#262626] pb-0.5 pl-[3px] text-[11px]">
      <button role="tab" aria-selected="false" className="flex items-center gap-1 bg-linear-to-b from-[#4a4a4a] to-[#8a8a8a] px-1 whitespace-nowrap text-white">
        <svg className="h-4 w-4" viewBox="0 0 16 16" aria-hidden="true">
          <circle cx="5" cy="5" r="3" fill="#333" stroke="#eee" strokeWidth="2" strokeDasharray="2 .6" />
          <circle cx="11" cy="11" r="3" fill="#333" stroke="#e8e04a" strokeWidth="2" strokeDasharray="2 .6" />
        </svg>
        Design Director
      </button>
      <button role="tab" aria-selected="true" className="flex items-center gap-1 rounded-br bg-linear-to-b from-[#b06a34] to-[#d9b08a] px-1 whitespace-nowrap text-[#1a1a1a]">
        <svg className="h-4 w-4" viewBox="0 0 16 16" aria-hidden="true">
          <path d="M1 1h14v14H1z" fill="#666" stroke="#fff" />
          <path d="M1 1h14v3H1z" fill="#9ac" />
          <path d="M5 5v8l2-2 2 4 1-1-1-3h3z" fill="#fff" />
        </svg>
        Selection Info
      </button>
    </div>
  </aside>
);

const Field = ({ label, value, spin }: { label: string; value: string; spin?: boolean }) => {
  const [text, setText] = useState(value);
  return (
    <label className="flex w-[52px] shrink-0 flex-col text-white">
      <span className="h-[15px] text-[11px] leading-[15px] whitespace-nowrap">{label}</span>
      <span className="flex h-[21px] w-full border border-[#9a9a9a] bg-black">
        <input
          value={text}
          onChange={(e) => setText(e.target.value)}
          className="w-full min-w-0 flex-1 bg-transparent pl-1 text-[11px] text-white outline-none"
        />
        {spin && (
          <span className="flex w-[15px] shrink-0 flex-col gap-px">
            <button type="button" tabIndex={-1} aria-label={label + " up"} className="flex flex-1 items-center justify-center bg-[#262626]">
              <svg className="h-0.5 w-1" viewBox="0 0 4 2" aria-hidden="true"><path d="M0 2h4L2 0z" fill="#fff" /></svg>
            </button>
            <button type="button" tabIndex={-1} aria-label={label + " down"} className="flex flex-1 items-center justify-center bg-[#262626]">
              <svg className="h-0.5 w-1" viewBox="0 0 4 2" aria-hidden="true"><path d="M0 0h4L2 2z" fill="#fff" /></svg>
            </button>
          </span>
        )}
      </span>
    </label>
  );
};

const Coord = ({ axis, value, off }: { axis: string; value: string; off?: boolean }) => (
  <label className="flex items-center gap-0.5 pt-0.5">
    <span className="flex w-2 flex-col items-center text-[9px] leading-[9px] text-white">
      <span className="h-[7px] w-[7px] border border-[#555] bg-white" />
      {axis}
    </span>
    <input
      defaultValue={value}
      disabled={off}
      className={clsx("h-5 w-[74px] border border-[#9a9a9a] bg-black pl-1 outline-none", off ? "text-[#777]" : "text-white")}
    />
  </label>
);

const Bar = ({ className }: { className?: string }) => <div className={clsx("w-px shrink-0 bg-[#d0d0d0]", className)} />;

export default function App() {
  return (
    <div className="relative flex h-screen flex-col overflow-hidden border-t border-[#b5823f] bg-[#dfaa66] pr-[9px] pb-2 pl-2 font-['Open_Sans',sans-serif] text-[12px] leading-4">
      <header className="flex h-[30px] shrink-0">
        <div className="flex w-32 items-start pt-1.5 pl-0.5">
          <svg className="h-4 w-4" viewBox="0 0 16 16" aria-hidden="true">
            <rect width="16" height="16" rx="1" fill="#1b5c86" />
            <path d="M2 3.5h12" stroke="#8cc4e6" strokeDasharray="1 1" />
            <text x="8" y="13" fontSize="7" textAnchor="middle" fill="#fff">2017</text>
          </svg>
        </div>
        <h1 className="flex-1 text-center text-[15px] leading-7 text-[#3a2a18]">TurboCAD Expert 2017 64-bit - [Drawing2 World Plan]</h1>
        <div className="flex w-32 items-start justify-end">
          <button type="button" aria-label="Minimize" className="flex h-5 w-[26px] items-center justify-center pt-1">
            <span className="h-0.5 w-2 bg-[#2a1d10]" />
          </button>
          <button type="button" aria-label="Maximize" className="flex h-5 w-[26px] items-center justify-center">
            <span className="h-2 w-2.5 border border-t-2 border-[#2a1d10]" />
          </button>
          <button type="button" aria-label="Close" className="flex h-5 w-[43px] items-center justify-center bg-[#c75050]">
            <svg className="h-2 w-2" viewBox="0 0 8 8" aria-hidden="true"><path d="M.5 .5l7 7M7.5 .5l-7 7" stroke="#fff" strokeWidth="1.6" /></svg>
          </button>
        </div>
      </header>

      <nav className="flex h-[26px] shrink-0 items-center border-t border-[#6a5a4a] bg-linear-to-b from-[#5c5c5c] to-[#8c8c8c] pb-0.5 pl-1.5">
        <Grip className="mr-[3px] h-4" />
        <div className="flex flex-1">
          {menus.map((m) => (
            <button key={m} type="button" className="px-[7px] text-white">{m}</button>
          ))}
        </div>
        <div className="flex gap-1.5 pr-1 pb-1">
          <button type="button" aria-label="Minimize drawing" className="flex h-2.5 w-2.5 items-end"><span className="h-0.5 w-[7px] bg-white" /></button>
          <button type="button" aria-label="Restore drawing">
            <svg className="h-2.5 w-2.5" viewBox="0 0 10 10" aria-hidden="true"><path d="M3 3V1h6v5H7M.7 4h6v5h-6z" fill="none" stroke="#fff" strokeWidth="1.5" /></svg>
          </button>
          <button type="button" aria-label="Close drawing">
            <svg className="h-2.5 w-2.5" viewBox="0 0 10 10" aria-hidden="true"><path d="M1 1l8 8M9 1L1 9" stroke="#fff" strokeWidth="2" /></svg>
          </button>
        </div>
      </nav>

      <div className="flex h-[33px] shrink-0 items-center border-t border-b border-t-[#3a3a3a] border-b-black bg-linear-to-b from-[#2a2a2a] to-[#5c5c5c] pl-1.5">
        <Grip className="mr-0.5 h-[22px]" />
        <ToolList items={mainTools} />
      </div>

      <div className="flex h-[34px] shrink-0 items-center border-b border-black bg-linear-to-b from-[#363636] to-[#5a5a5a] pl-1.5">
        <Grip className="mr-0.5 h-[22px]" />
        <ToolList items={[["gear", "Settings"], ["layersHand", "Layers"]]} />
        <div className="relative mr-0.5 ml-px">
          <Combo label="Layer" value="Layer_1" width="w-[280px]" className="pl-[61px]" />
          <div className="pointer-events-none absolute top-1 left-1 flex items-center gap-1">
            <svg className="h-4 w-3" viewBox="0 0 12 16" aria-hidden="true">
              <path d="M0 8q6-7 12 0-6 6-12 0z" fill="#dfe6f5" />
              <circle cx="6" cy="8" r="2.8" fill="#2c3f8c" />
              <path d="M1 5q5-4 10 0" fill="none" stroke="#999" />
            </svg>
            <svg className="h-4 w-3" viewBox="0 0 12 16" aria-hidden="true">
              <path d="M7 7V3q2-2 4 0v2" fill="none" stroke="#ccc" strokeWidth="1.3" />
              <rect x="1" y="6.5" width="8" height="7" rx="3" fill="#d5d5d5" />
              <path d="M5 9v3" stroke="#444" />
            </svg>
            <span className="h-4 w-4 border border-white bg-[#fe0000]" />
          </div>
        </div>
        <div className="flex gap-0.5">
          <Combo label="Pen color" value="By Layer" width="w-[81px]" className="pl-[18px]" />
          <Combo label="Pen style" value="By Layer" width="w-[82px]" className="pb-1 pl-[5px]" />
          <Combo label="Pen width" value="By Layer" width="w-[82px]" className="pb-1 pl-0.5" />
          <Combo label="Brush color" value="By Layer" width="w-[101px]" className="pl-7" hot />
          <Combo label="Brush style" value="None" width="w-[81px]" className="pb-1 pl-[5px]" />
        </div>
        <Bar className="mx-[3px] h-[22px]" />
        <div className="relative flex items-center">
          <select aria-label="Print style" disabled className="h-6 w-[99px] appearance-none border border-[#8a8a8a] bg-[#505050]" />
          <span className="pointer-events-none absolute right-1"><Down color="#999" /></span>
        </div>
        <div className="ml-auto flex h-full w-[187px] items-center border-l border-black pl-1.5">
          <Grip className="mr-px h-[22px]" />
          <ToolList items={wallTools} />
        </div>
      </div>

      <main className="flex min-h-0 flex-1 bg-[#262626]">
        <div className="flex w-[35px] shrink-0 flex-col items-center border-r-2 border-black bg-linear-to-r from-[#2f2f2f] to-[#606060]">
          <div className="mt-1.5 mb-[3px] w-[22px] border-t-2 border-dotted border-[#a5a5a5]" />
          <ToolList items={leftTools} vertical active={0} />
        </div>
        <Workspace />
        <div className="w-1 shrink-0 bg-[#202020]" />
        <SelectionInfo />
        <div className="w-[34px] shrink-0">
          <div className="flex flex-col items-center border-b border-l-2 border-[#555] border-b-black bg-linear-to-r from-[#2f2f2f] to-[#606060]">
            <div className="mt-1.5 mb-[3px] w-[22px] border-t-2 border-dotted border-[#a5a5a5]" />
            <ToolList items={rightTools} vertical />
          </div>
        </div>
      </main>

      <div className="flex h-[41px] shrink-0 items-center border-t border-b border-t-[#777] border-b-black bg-linear-to-b from-[#2a2a2a] to-[#5e5e5e] pl-1.5">
        <Grip className="mr-[3px] h-[30px]" />
        {["magic", "cancel", "sheet"].map((n) => <SmallTool key={n} name={n} />)}
        <Bar className="mr-1 ml-0.5 h-7" />
        <div className="flex gap-[3px]">
          {fields.map((f) => <Field key={f.label} {...f} />)}
        </div>
        <Bar className="mr-[3px] ml-[3px] h-7" />
        {snapTools.map((n) => <SmallTool key={n} name={n} />)}
        <Bar className="mx-[3px] h-7" />
        {selectTools.map((n, i) => <SmallTool key={n} name={n} active={i === 0} />)}
        <Bar className="mx-[3px] h-7" />
        {modifyTools.map((n) => <SmallTool key={n} name={n} />)}
      </div>

      <footer className="flex h-[26px] shrink-0 items-center border-t border-[#777] bg-linear-to-b from-[#2a2a2a] to-[#565656] text-white">
        <p className="flex-1 pb-1 pl-[9px]">Brush Color</p>
        <button type="button">SNAP</button>
        <Bar className="mx-1 h-[22px]" />
        <button type="button">GEO</button>
        <Bar className="mr-[14px] ml-[3px] h-[22px]" />
        <div className="flex gap-3">
          <Coord axis="X" value="3.15 in" />
          <Coord axis="Y" value="8.57 in" />
          <Coord axis="Z" value="0 in" off />
        </div>
        <Bar className="mr-1 ml-[5px] h-[22px]" />
        <span className="w-[51px] pb-1">58%</span>
        <Bar className="mr-1 h-[22px]" />
        <time className="w-[55px] pb-1 whitespace-nowrap">11:18 AM</time>
        <Bar className="h-[22px]" />
        <svg className="mt-3 mr-0.5 ml-1.5 h-2.5 w-2.5" viewBox="0 0 10 10" aria-hidden="true">
          <path d="M7 1h2v2H7zM4 4h2v2H4zM7 4h2v2H7zM1 7h2v2H1zM4 7h2v2H4zM7 7h2v2H7z" fill="#aaa" />
        </svg>
      </footer>

      <svg className="pointer-events-none absolute top-[109px] left-[777px] h-5 w-3" viewBox="0 0 12 20" aria-hidden="true">
        <path d="M.5 .5v15l3.500-3.500 2.500 6 2.500-1-2.500-5.500h5z" fill="#fff" stroke="#222" strokeWidth=".6" />
      </svg>
    </div>
  );
}
